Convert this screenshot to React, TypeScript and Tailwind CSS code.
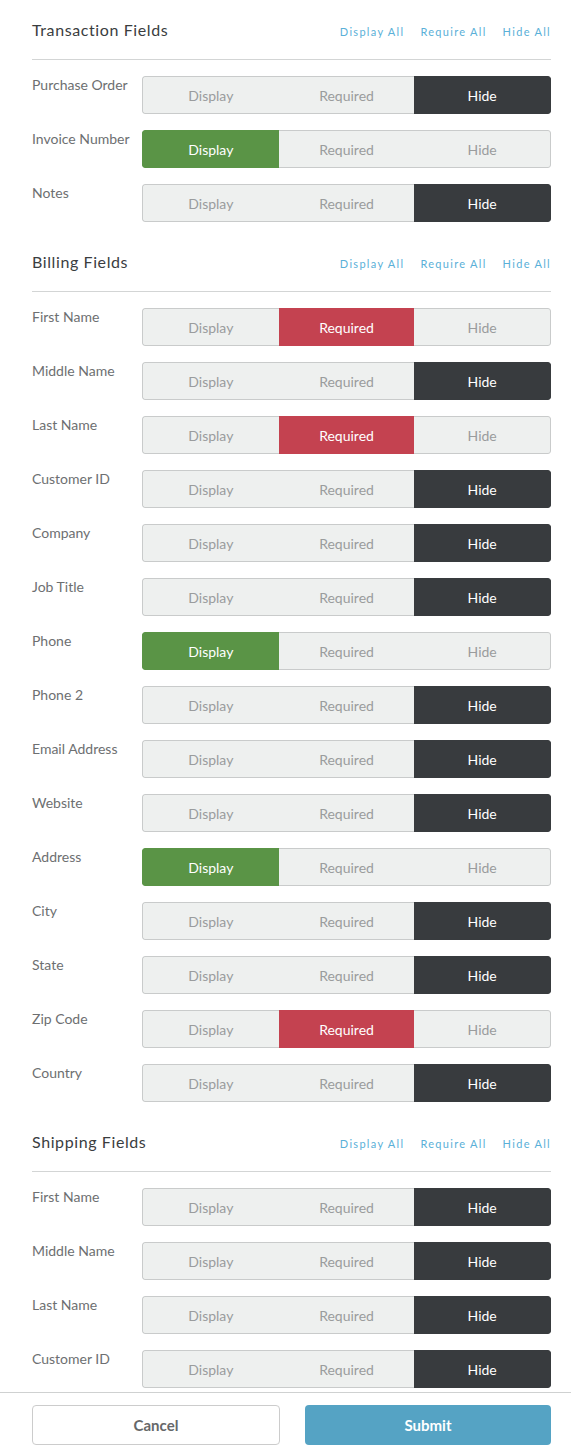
import React from "react";

type Mode = "display" | "required" | "hide";

const transaction: [string, Mode][] = [
  ["Purchase Order", "hide"],
  ["Invoice Number", "display"],
  ["Notes", "hide"],
];

const billing: [string, Mode][] = [
  ["First Name", "required"],
  ["Middle Name", "hide"],
  ["Last Name", "required"],
  ["Customer ID", "hide"],
  ["Company", "hide"],
  ["Job Title", "hide"],
  ["Phone", "display"],
  ["Phone 2", "hide"],
  ["Email Address", "hide"],
  ["Website", "hide"],
  ["Address", "display"],
  ["City", "hide"],
  ["State", "hide"],
  ["Zip Code", "required"],
  ["Country", "hide"],
];

const shipping: [string, Mode][] = [
  ["First Name", "hide"],
  ["Middle Name", "hide"],
  ["Last Name", "hide"],
  ["Customer ID", "hide"],
];

function Segmented({ value }: { value: Mode }) {
  const opts: { key: Mode; label: string; active: string }[] = [
    { key: "display", label: "Display", active: "bg-[#5a9446] border-[#5a9446]" },
    { key: "required", label: "Required", active: "bg-[#c44250] border-[#c44250]" },
    { key: "hide", label: "Hide", active: "bg-[#383b3e] border-[#383b3e]" },
  ];
  return (
    <div className="flex h-[38px] flex-1 overflow-hidden rounded-[3px]">
      {opts.map((o, i) => {
        const on = o.key === value;
        const edge = i === 0 ? "border-l rounded-l-[3px]" : i === 2 ? "border-r rounded-r-[3px]" : "";
        return (
          <div
            key={o.key}
            className={`flex flex-1 items-center justify-center border-y text-[14px] ${edge} ${
              on ? `${o.active} text-white` : "border-[#c9cbcb] bg-[#eef0ef] text-[#9a9c9d]"
            }`}
          >
            {o.label}
          </div>
        );
      })}
    </div>
  );
}

function Section({ title, rows }: { title: string; rows: [string, Mode][] }) {
  return (
    <div>
      <div className="flex h-[60px] items-center justify-between border-b border-[#d3d5d5]">
        <h2 className="text-[16px] tracking-[0.6px] text-[#3a3d3f]">{title}</h2>
        <div className="flex gap-4 pt-[5px] text-[11px] tracking-[1.3px] text-[#5ab0d8]">
          <span>Display All</span>
          <span>Require All</span>
          <span>Hide All</span>
        </div>
      </div>
      <div className="flex flex-col gap-4 pt-[16px]">
        {rows.map(([label, mode], i) => (
          <div key={i} className="flex">
            <div className="w-[110px] text-[14px] leading-[18px] text-[#6d6f71]">{label}</div>
            <Segmented value={mode} />
          </div>
        ))}
      </div>
    </div>
  );
}

export default function App() {
  return (
    <div
      className="flex h-[1451px] w-[571px] flex-col overflow-hidden bg-white"
      style={{ fontFamily: "Lato, 'Open Sans', sans-serif" }}
    >
      <div className="flex-1 overflow-hidden pl-[32px] pr-[20px]">
        <div className="flex flex-col gap-[10px]">
          <Section title="Transaction Fields" rows={transaction} />
          <Section title="Billing Fields" rows={billing} />
          <Section title="Shipping Fields" rows={shipping} />
        </div>
      </div>
      <div className="flex h-[59px] gap-[25px] border-t border-[#cfd1d1] pl-[32px] pr-[20px] pt-[12px]">
        <button className="h-[40px] flex-1 rounded-[4px] border border-[#cccccc] bg-white text-[15px] font-bold text-[#666869]">
          Cancel
        </button>
        <button className="h-[40px] flex-1 rounded-[4px] bg-[#55a3c4] text-[15px] font-bold text-white">
          Submit
        </button>
      </div>
    </div>
  );
}
